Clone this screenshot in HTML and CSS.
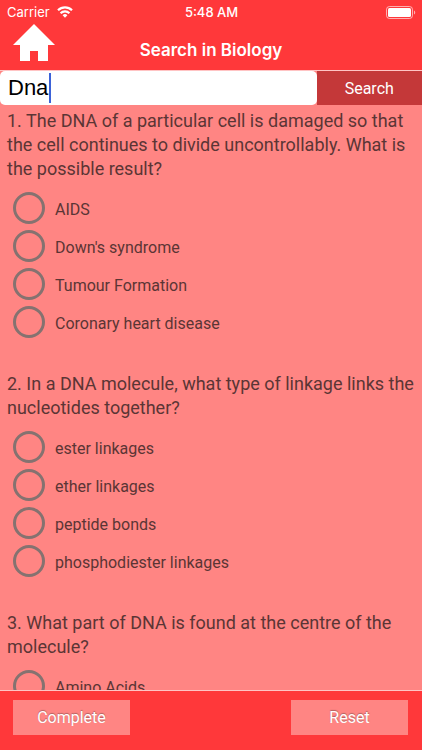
FILE: index.html
```html
<!DOCTYPE html>
<html lang="en">
<head>
  <meta charset="UTF-8" />
  <meta name="viewport" content="width=device-width, initial-scale=1.0" />
  <title>Search in Biology</title>
  <link rel="stylesheet" href="styles.css">
</head>
<body>
  <header>
    <div class="status-bar">
      <div class="carrier">
        <span>Carrier</span>
        <svg width="16" height="12" viewBox="0 0 16 12" fill="none" stroke="#fff" stroke-width="2.2">
          <path d="M1 4.3a10 10 0 0 1 14 0" />
          <path d="M3.6 7.2a6.2 6.2 0 0 1 8.8 0" />
          <path d="M8 11.7 5.6 9.2a3.4 3.4 0 0 1 4.8 0z" fill="#fff" stroke="none" />
        </svg>
      </div>
      <span class="time">5:48 AM</span>
      <svg class="battery" width="30" height="13" viewBox="0 0 30 13">
        <rect x="0.5" y="0.5" width="26" height="12" rx="3" fill="none" stroke="#fff" stroke-opacity="0.6" />
        <rect x="2" y="2" width="23" height="9" rx="1.5" fill="#fff" />
        <path d="M28 4.5c1.7.6 1.7 3.4 0 4z" fill="#fff" fill-opacity="0.6" />
      </svg>
    </div>
    <div class="nav-bar">
      <button type="button" class="home-btn" aria-label="Home">
        <svg width="42" height="37" viewBox="0 0 42 37">
          <path d="M21 0 42 21H35V37H25V27H17V37H7V21H0z" fill="#fff" />
        </svg>
      </button>
      <h1>Search in Biology</h1>
    </div>
  </header>

  <form class="search-form">
    <div class="search-box">
      <input type="text" id="keyword" value="Dna" aria-label="Keyword" />
      <span class="cursor"></span>
    </div>
    <button type="submit" class="search-btn">Search</button>
  </form>

  <main>
    <form id="quizForm">
      <fieldset>
        <legend>1. The DNA of a particular cell is damaged so that the cell continues to divide uncontrollably. What is the possible result?</legend>
        <label><input type="radio" name="q1" /><span>AIDS</span></label>
        <label><input type="radio" name="q1" /><span>Down's syndrome</span></label>
        <label><input type="radio" name="q1" /><span>Tumour Formation</span></label>
        <label><input type="radio" name="q1" /><span>Coronary heart disease</span></label>
      </fieldset>

      <fieldset>
        <legend>2. In a DNA molecule, what type of linkage links the nucleotides together?</legend>
        <label><input type="radio" name="q2" /><span>ester linkages</span></label>
        <label><input type="radio" name="q2" /><span>ether linkages</span></label>
        <label><input type="radio" name="q2" /><span>peptide bonds</span></label>
        <label><input type="radio" name="q2" /><span>phosphodiester linkages</span></label>
      </fieldset>

      <fieldset>
        <legend>3. What part of DNA is found at the centre of the molecule?</legend>
        <label><input type="radio" name="q3" /><span>Amino Acids</span></label>
      </fieldset>
    </form>
  </main>

  <footer>
    <button type="submit" form="quizForm" class="footer-btn">Complete</button>
    <button type="reset" form="quizForm" class="footer-btn">Reset</button>
  </footer>
</body>
</html>
```

FILE: styles.css
```css
* {
  box-sizing: border-box;
}
body {
  display: flex;
  flex-direction: column;
  height: 100vh;
  margin: 0;
  overflow: hidden;
  background-color: #ff8583;
  color: #5b3535;
  font-family: Roboto, "Liberation Sans", sans-serif;
  font-size: 16px;
}
button, input {
  font-family: inherit;
}
button {
  border: none;
  border-radius: 0;
  padding: 0;
  cursor: pointer;
}
header {
  background-color: #ff383a;
  color: white;
  border-bottom: 1px solid #ffc4c4;
  font-family: Inter, "Liberation Sans", sans-serif;
}
.status-bar {
  display: grid;
  grid-template-columns: 1fr auto 1fr;
  align-items: center;
  height: 24px;
  padding: 0 6px 0 7px;
  font-size: 13px;
}
.carrier {
  display: flex;
  align-items: center;
  gap: 7px;
}
.time {
  font-weight: 500;
}
.battery {
  justify-self: end;
}
.nav-bar {
  display: grid;
  grid-template-columns: 56px 1fr 56px;
  height: 46px;
  padding: 0 13px;
}
.home-btn {
  width: 42px;
  height: 37px;
  background: none;
}
.home-btn svg {
  display: block;
}
h1 {
  margin: 0;
  padding-top: 14px;
  font-size: 17px;
  line-height: 24px;
  font-weight: 600;
  text-align: center;
}
.search-form {
  display: flex;
  height: 34px;
}
.search-box {
  flex: 3;
  position: relative;
}
.search-box input {
  width: 100%;
  height: 100%;
  padding: 0 8px;
  border: none;
  border-radius: 5px;
  background-color: white;
  color: black;
  font-family: "Liberation Sans", Arial, sans-serif;
  font-size: 22px;
  outline: none;
}
/* text cursor over the input */
.cursor {
  position: absolute;
  left: 49px;
  top: 2px;
  width: 2px;
  height: 30px;
  background-color: #3b62d8;
}
.search-btn {
  flex: 1;
  background-color: #c43839;
  color: white;
  font-size: 16px;
}
main {
  flex: 1;
  min-height: 0;
  overflow: hidden;
  padding: 4px 7px 0;
}
fieldset {
  margin: 0 0 31px;
  padding: 0;
  border: none;
}
legend {
  margin-bottom: 8px;
  padding: 0;
  font-size: 18px;
  line-height: 24px;
}
label {
  display: flex;
  align-items: center;
  gap: 10px;
  height: 38px;
  padding-left: 6px;
}
label input {
  appearance: none;
  width: 32px;
  height: 32px;
  margin: 0;
  border: 3px solid #857270;
  border-radius: 50%;
}
label span {
  padding-top: 3px;
}
footer {
  display: flex;
  justify-content: space-between;
  align-items: flex-start;
  height: 60px;
  padding: 9px 14px 0 13px;
  border-top: 1px solid #ffc4c4;
  background-color: #ff383a;
}
.footer-btn {
  width: 117px;
  height: 35px;
  background-color: #ff8583;
  color: white;
  font-size: 16px;
  text-shadow: 0 -1px 1px #b06060;
}
```
